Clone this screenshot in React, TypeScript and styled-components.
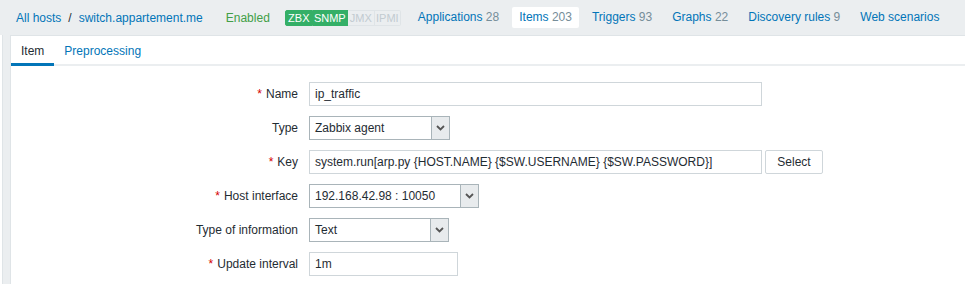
import React from "react";
import styled, { createGlobalStyle } from "styled-components";

const Global = createGlobalStyle`
  html, body { margin: 0; padding: 0; background: #ebeef0; }
  body { font-family: Arial, "Liberation Sans", sans-serif; font-size: 12px; color: #1f2c33; }
`;

const Page = styled.div`
  width: 965px;
  height: 284px;
  overflow: hidden;
  background: #ebeef0;
  display: flex;
  flex-direction: column;
`;

const Header = styled.div`
  height: 35px;
  display: flex;
  align-items: center;
  padding-left: 16px;
  white-space: nowrap;
`;

const Crumb = styled.a`
  color: #0275b8;
  text-decoration: none;
`;

const Sep = styled.span`
  color: #1f2c33;
  margin: 0 7px 0 7px;
`;

const Status = styled.span`
  color: #429e47;
  margin-left: 23px;
  margin-right: 15px;
`;

const Badges = styled.span`
  display: inline-flex;
  height: 16px;
  margin-right: 10px;
`;

const Badge = styled.span<{ $on?: boolean; $w: number }>`
  box-sizing: border-box;
  width: ${(p) => p.$w}px;
  display: inline-flex;
  align-items: center;
  justify-content: center;
  font-size: 11px;
  line-height: 14px;
  border: 1px solid ${(p) => (p.$on ? "#34af67" : "#dfe4e7")};
  border-left-width: 0;
  background: ${(p) => (p.$on ? "#34af67" : "#ebeef0")};
  color: ${(p) => (p.$on ? "#ffffff" : "#c2cbd0")};
  &:first-child { border-left-width: 1px; border-radius: 2px 0 0 2px; }
  &:last-child { border-radius: 0 2px 2px 0; }
`;

const NavLink = styled.a<{ $active?: boolean }>`
  color: #0275b8;
  text-decoration: none;
  padding: 4px 7px 4px 7px;
  margin-right: 6px;
  border-radius: 2px;
  background: ${(p) => (p.$active ? "#ffffff" : "transparent")};
  line-height: 13px;
`;

const Count = styled.span`
  color: #768d99;
`;

const Body = styled.div`
  flex: 1;
  display: flex;
`;

const LeftStrip = styled.div`
  width: 2px;
  background: #ffffff;
  border-right: 1px solid #dfe4e7;
  margin-right: 7px;
`;

const Panel = styled.div`
  flex: 1;
  background: #ffffff;
  border-left: 1px solid #dfe4e7;
  border-top: 1px solid #dfe4e7;
`;

const Tabs = styled.div`
  display: flex;
  height: 28px;
  border-bottom: 2px solid #ebeef0;
`;

const Tab = styled.a<{ $active?: boolean }>`
  display: flex;
  align-items: center;
  padding: 2px 10px 0 10px;
  color: ${(p) => (p.$active ? "#1f2c33" : "#0275b8")};
  text-decoration: none;
  border-bottom: 3px solid ${(p) => (p.$active ? "#0275b8" : "transparent")};
  margin-bottom: -2px;
`;

const Form = styled.div`
  display: grid;
  grid-template-columns: 287px auto;
  column-gap: 11px;
  row-gap: 10px;
  padding-top: 16px;
  justify-content: start;
`;

const Label = styled.label`
  display: flex;
  align-items: center;
  justify-content: flex-end;
  height: 24px;
  white-space: nowrap;
`;

const Req = styled.span`
  color: #d40000;
  margin-right: 4px;
`;

const Field = styled.div`
  display: flex;
  align-items: center;
  gap: 3px;
`;

const Input = styled.div<{ $w: number }>`
  box-sizing: border-box;
  width: ${(p) => p.$w}px;
  height: 24px;
  border: 1px solid #cfd6da;
  padding: 0 5px;
  display: flex;
  align-items: center;
  white-space: nowrap;
  overflow: hidden;
  color: #1f2c33;
`;

const SelectBox = styled.div<{ $w: number }>`
  box-sizing: border-box;
  width: ${(p) => p.$w}px;
  height: 24px;
  border: 1px solid #a9b4b9;
  display: flex;
  align-items: stretch;
  background: #ffffff;
`;

const SelectText = styled.div`
  flex: 1;
  display: flex;
  align-items: center;
  padding: 0 5px;
  white-space: nowrap;
`;

const Arrow = styled.div`
  width: 17px;
  background: #e8ebed;
  border-left: 1px solid #a9b4b9;
  display: flex;
  align-items: center;
  justify-content: center;
`;

const Button = styled.div`
  box-sizing: border-box;
  height: 24px;
  width: 58px;
  border: 1px solid #cfd6da;
  border-radius: 2px;
  display: flex;
  align-items: center;
  justify-content: center;
  color: #1f2c33;
`;

const Chevron = () => (
  <svg width="9" height="6" viewBox="0 0 9 6">
    <path d="M1 1 L4.5 4.5 L8 1" fill="none" stroke="#555" strokeWidth="1.8" />
  </svg>
);

const Select = ({ w, value }: { w: number; value: string }) => (
  <SelectBox $w={w}>
    <SelectText>{value}</SelectText>
    <Arrow>
      <Chevron />
    </Arrow>
  </SelectBox>
);

export default function App() {
  return (
    <Page>
      <Global />
      <Header>
        <Crumb>All hosts</Crumb>
        <Sep>/</Sep>
        <Crumb>switch.appartement.me</Crumb>
        <Status>Enabled</Status>
        <Badges>
          <Badge $on $w={28}>ZBX</Badge>
          <Badge $on $w={35}>SNMP</Badge>
          <Badge $w={27}>JMX</Badge>
          <Badge $w={26}>IPMI</Badge>
        </Badges>
        <NavLink>
          Applications <Count>28</Count>
        </NavLink>
        <NavLink $active>
          Items <Count>203</Count>
        </NavLink>
        <NavLink>
          Triggers <Count>93</Count>
        </NavLink>
        <NavLink>
          Graphs <Count>22</Count>
        </NavLink>
        <NavLink>
          Discovery rules <Count>9</Count>
        </NavLink>
        <NavLink>Web scenarios</NavLink>
      </Header>
      <Body>
        <LeftStrip />
        <Panel>
          <Tabs>
            <Tab $active>Item</Tab>
            <Tab>Preprocessing</Tab>
          </Tabs>
          <Form>
            <Label>
              <Req>*</Req>Name
            </Label>
            <Field>
              <Input $w={453}>ip_traffic</Input>
            </Field>
            <Label>Type</Label>
            <Field>
              <Select w={141} value="Zabbix agent" />
            </Field>
            <Label>
              <Req>*</Req>Key
            </Label>
            <Field>
              <Input $w={453}>system.run[arp.py {"{HOST.NAME}"} {"{$SW.USERNAME}"} {"{$SW.PASSWORD}"}]</Input>
              <Button>Select</Button>
            </Field>
            <Label>
              <Req>*</Req>Host interface
            </Label>
            <Field>
              <Select w={170} value="192.168.42.98 : 10050" />
            </Field>
            <Label>Type of information</Label>
            <Field>
              <Select w={140} value="Text" />
            </Field>
            <Label>
              <Req>*</Req>Update interval
            </Label>
            <Field>
              <Input $w={149}>1m</Input>
            </Field>
          </Form>
        </Panel>
      </Body>
    </Page>
  );
}
